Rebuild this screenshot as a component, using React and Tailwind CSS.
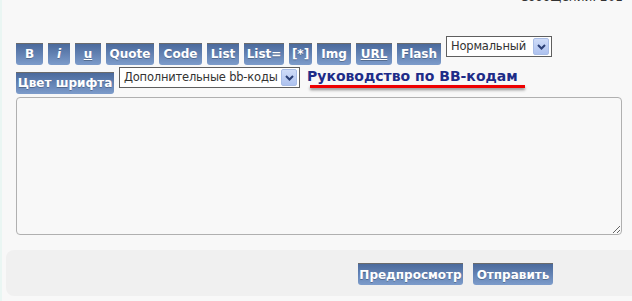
const row1 = [
  { label: "B", cls: "w-[27px]" },
  { label: "i", cls: "w-[22px] italic" },
  { label: "u", cls: "w-[26px] underline" },
  { label: "Quote", cls: "w-[48px]" },
  { label: "Code", cls: "w-[43px]" },
  { label: "List", cls: "w-[32px]" },
  { label: "List=", cls: "w-[40px]" },
  { label: "[*]", cls: "w-[23px]" },
  { label: "Img", cls: "w-[34px]" },
  { label: "URL", cls: "w-[36px] underline" },
  { label: "Flash", cls: "w-[44px]" },
];

function BBButton({ label, cls }) {
  return (
    <button
      type="button"
      className={`h-[22px] ${cls} shrink-0 border-t border-[#6b6b6b] rounded-b-[3px] bg-gradient-to-b from-[#4b6a9c] to-[#7d9ccb] text-white text-[12px] font-bold leading-[20px] text-center whitespace-nowrap [text-shadow:0_1px_0_rgba(0,0,0,0.25)]`}
    >
      {label}
    </button>
  );
}

function FakeSelect({ value, cls }) {
  return (
    <div
      className={`h-[21px] ${cls} shrink-0 border border-[#5f5f5f] bg-white flex items-center justify-between pl-[4px] pr-[2px]`}
    >
      <span className="text-[11.5px] tracking-[-0.2px] text-[#333] leading-none whitespace-nowrap">{value}</span>
      <span className="w-[16px] h-[17px] shrink-0 rounded-[2px] border border-[#a9bde6] bg-gradient-to-b from-[#cfdcf8] to-[#aec2ef] flex items-center justify-center">
        <svg width="9" height="6" viewBox="0 0 9 6">
          <path d="M1 1 L4.5 4.5 L8 1" fill="none" stroke="#2b3f75" strokeWidth="2" />
        </svg>
      </span>
    </div>
  );
}

export default function App() {
  return (
    <div className="w-[632px] h-[301px] overflow-hidden bg-[#f8f8f8] border-l-2 border-[#eaf6f3] font-['DejaVu_Sans',sans-serif]">
      {/* header text, mostly scrolled off the top */}
      <div className="h-[36px] flex justify-end pr-[9px]">
        <span className="-mt-[9px] text-[12px] text-[#333] leading-[12px]">Сообщений: 201</span>
      </div>

      {/* Toolbar row 1 */}
      <div className="flex items-start gap-[5px] pl-[14px]">
        {row1.map((b) => (
          <div key={b.label} className="mt-[5px]">
            <BBButton {...b} />
          </div>
        ))}
        <FakeSelect value="Нормальный" cls="w-[106px]" />
      </div>

      {/* Toolbar row 2 */}
      <div className="flex items-start pl-[14px] mt-[2px]">
        <div className="mt-[3px]">
          <BBButton label="Цвет шрифта" cls="w-[98px]" />
        </div>
        <div className="ml-[5px]">
          <FakeSelect value="Дополнительные bb-коды" cls="w-[181px]" />
        </div>
        <div className="ml-[7px] flex flex-col">
          <a href="#" className="text-[14px] font-bold text-[#1e2c88] leading-[16px] mt-[1px]">
            Руководство по BB-кодам
          </a>
          <div className="ml-[3px] mt-[1px] w-[215px] h-[3px] bg-[#ee0000] shadow-[0_2px_3px_rgba(0,0,0,0.45)]" />
        </div>
      </div>

      {/* Textarea */}
      <div className="pl-[14px] pr-[10px] mt-[3px]">
        <textarea className="block w-[606px] h-[138px] bg-[#f8f8f8] border border-[#b0b0b0] rounded-[4px] outline-none" />
      </div>

      {/* Bottom panel */}
      <div className="mt-[15px] ml-[4px] -mr-[12px] h-[46px] bg-[#f0f0f0] rounded-[8px] flex items-start pl-[352px] gap-[10px] pt-[13px]">
        <BBButton label="Предпросмотр" cls="w-[105px]" />
        <BBButton label="Отправить" cls="w-[80px]" />
      </div>
    </div>
  );
}
